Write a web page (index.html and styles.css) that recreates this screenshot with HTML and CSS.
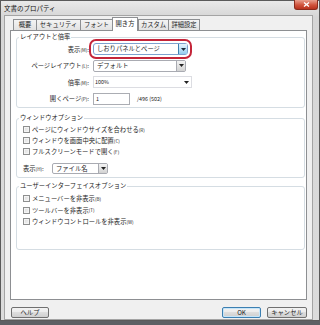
FILE: index.html
```html
<!DOCTYPE html>
<html lang="ja">
<head>
    <meta charset="UTF-8">
    <meta name="viewport" content="width=device-width, initial-scale=1.0">
    <title>文書のプロパティ</title>
    <link rel="stylesheet" href="styles.css">
</head>
<body>
    <div class="window">
        <div class="titlebar">
            <span class="title">文書のプロパティ</span>
            <span class="close-btn">
                <svg width="7" height="5" viewBox="0 0 7 5"><path d="M1 0.5l5 4M6 0.5l-5 4" stroke="#fff" stroke-width="1.3"/></svg>
            </span>
        </div>
        <div class="frame">
            <div class="client">
                <div class="tabs">
                    <div class="tab tab-summary">概要</div>
                    <div class="tab tab-security">セキュリティ</div>
                    <div class="tab tab-font">フォント</div>
                    <div class="tab tab-open active">開き方</div>
                    <div class="tab tab-custom">カスタム</div>
                    <div class="tab tab-advanced">詳細設定</div>
                </div>

                <div class="panel">
                    <!-- レイアウトと倍率 -->
                    <fieldset class="group group-layout">
                        <legend>レイアウトと倍率</legend>
                        <div class="layout-grid">
                            <label class="row-label">表示<span class="key">(M)</span>:</label>
                            <div class="combo combo-hot highlight w95">
                                <span class="combo-text">しおりパネルとページ</span>
                                <span class="combo-btn"><svg width="5" height="3" viewBox="0 0 5 3"><path d="M0 0h5L2.5 3z" fill="#1b2a3a"/></svg></span>
                            </div>

                            <label class="row-label">ページレイアウト<span class="key">(L)</span>:</label>
                            <div class="combo w93">
                                <span class="combo-text">デフォルト</span>
                                <span class="combo-btn"><svg width="5" height="3" viewBox="0 0 5 3"><path d="M0 0h5L2.5 3z" fill="#222"/></svg></span>
                            </div>

                            <label class="row-label">倍率<span class="key">(M)</span>:</label>
                            <div class="combo combo-flat w99">
                                <span class="combo-text small">100%</span>
                                <span class="combo-arrow"><svg width="5" height="3" viewBox="0 0 5 3"><path d="M0 0h5L2.5 3z" fill="#222"/></svg></span>
                            </div>

                            <label class="row-label">開くページ<span class="key">(P)</span>:</label>
                            <div class="page-row">
                                <span class="textbox">1</span>
                                <span class="page-count">/496 (502)</span>
                            </div>
                        </div>
                    </fieldset>

                    <!-- ウィンドウオプション -->
                    <fieldset class="group group-window">
                        <legend>ウィンドウオプション</legend>
                        <div class="check-row"><span class="checkbox"></span>ページにウィンドウサイズを合わせる<span class="key">(R)</span></div>
                        <div class="check-row"><span class="checkbox"></span>ウィンドウを画面中央に配置<span class="key">(C)</span></div>
                        <div class="check-row"><span class="checkbox"></span>フルスクリーンモードで開く<span class="key">(F)</span></div>
                        <div class="show-row">
                            <label class="show-label">表示<span class="key">(H)</span>:</label>
                            <div class="combo w56">
                                <span class="combo-text">ファイル名</span>
                                <span class="combo-btn"><svg width="5" height="3" viewBox="0 0 5 3"><path d="M0 0h5L2.5 3z" fill="#222"/></svg></span>
                            </div>
                        </div>
                    </fieldset>

                    <!-- ユーザーインターフェイスオプション -->
                    <fieldset class="group group-ui">
                        <legend>ユーザーインターフェイスオプション</legend>
                        <div class="check-row tall"><span class="checkbox"></span>メニューバーを非表示<span class="key">(B)</span></div>
                        <div class="check-row tall"><span class="checkbox"></span>ツールバーを非表示<span class="key">(T)</span></div>
                        <div class="check-row tall"><span class="checkbox"></span>ウィンドウコントロールを非表示<span class="key">(W)</span></div>
                    </fieldset>
                </div>

                <div class="buttons">
                    <button class="btn btn-help">ヘルプ</button>
                    <div class="spacer"></div>
                    <button class="btn btn-default">OK</button>
                    <button class="btn btn-cancel">キャンセル</button>
                </div>
            </div>
        </div>
    </div>
</body>
</html>
```

FILE: styles.css
```css
* {
    box-sizing: border-box;
}
body {
    margin: 0;
    width: 320px;
    height: 325px;
    overflow: hidden;
    background: #5d6064;
    font-family: "Noto Sans CJK JP", "Noto Sans", sans-serif;
    font-size: 6.3px;
    color: #1e1e1e;
}
.window {
    width: 320px;
    height: 321px;
    border: 1px solid #5a5a5a;
    background: linear-gradient(#e9e9e9, #d6d6d6 16px, #dcdcdc);
    display: flex;
    flex-direction: column;
}
.titlebar {
    height: 14px;
    display: flex;
    align-items: center;
    justify-content: space-between;
    padding: 0 1px 0 3px;
}
.title {
    font-size: 6.5px;
    color: #111;
}
.close-btn {
    align-self: flex-start;
    margin-top: -1px;
    width: 24px;
    height: 10px;
    background: linear-gradient(#e8a08f, #d0533c 55%, #b8321e);
    border: 1px solid #8a2b1c;
    border-top: none;
    border-radius: 0 0 3px 3px;
    display: flex;
    align-items: center;
    justify-content: center;
}
.frame {
    flex: 1;
    display: flex;
    padding: 0 6px 0 3px;
}
.client {
    flex: 1;
    display: flex;
    flex-direction: column;
    background: #f0f0f0;
    border: 1px solid #a4a4a4;
    padding: 0 5px;
}

/* tabs */
.tabs {
    display: flex;
    align-items: flex-end;
    height: 13px;
    margin-top: 1px;
    padding-left: 3px;
}
.tab {
    height: 11px;
    line-height: 10px;
    text-align: center;
    border: 1px solid #8d8f92;
    border-bottom: none;
    border-right: none;
    background: linear-gradient(#f4f4f4, #e2e2e2);
    white-space: nowrap;
}
.tab:last-child,
.tab.active {
    border-right: 1px solid #8d8f92;
}
.tab.active {
    height: 14px;
    line-height: 12px;
    margin-bottom: -1px;
    background: #fff;
    position: relative;
    z-index: 1;
}
.tab-summary { width: 23px; }
.tab-security { width: 44px; }
.tab-font { width: 32px; }
.tab-open { width: 26px; }
.tab-custom { width: 30px; }
.tab-advanced { width: 32px; }

/* panel */
.panel {
    height: 270px;
    background: #fff;
    border: 1px solid #8d8f92;
    padding: 2px 1px 0 5px;
}
.group {
    margin: 0;
    min-width: 0;
    border: 1px solid #d5dde3;
    border-radius: 3px;
    padding: 2px 4px 2px 6px;
}
.group legend {
    padding: 0 1px;
    margin-left: -4px;
    line-height: 8px;
    color: #222;
}
.key {
    font-size: 4.6px;
}

/* layout grid */
.layout-grid {
    display: grid;
    grid-template-columns: 66px auto;
    column-gap: 4px;
    row-gap: 4.5px;
    grid-auto-rows: 12px;
    align-items: center;
}
.row-label {
    text-align: right;
    white-space: nowrap;
}
.combo {
    display: flex;
    height: 12px;
    border: 1px solid #a9abb2;
    border-radius: 2px;
    background: #fff;
}
.combo-text {
    flex: 1;
    padding-left: 3px;
    line-height: 10px;
    white-space: nowrap;
    overflow: hidden;
}
.combo-text.small {
    font-size: 5.4px;
    padding-left: 1px;
}
.combo-btn {
    width: 9px;
    display: flex;
    align-items: center;
    justify-content: center;
    border-left: 1px solid #a9abb2;
    background: linear-gradient(#f3f3f3, #e3e3e3 50%, #d2d2d2);
}
.combo-hot {
    border-color: #7da2ce;
}
.combo-hot .combo-btn {
    border-left-color: #3c7fb1;
    background: linear-gradient(#e6f4fc, #bfe3f8 50%, #93cdef);
}
.combo-flat {
    border-color: #dcdde2;
    border-radius: 0;
}
.combo-arrow {
    width: 9px;
    display: flex;
    align-items: center;
    justify-content: center;
}
.highlight {
    box-shadow: 0 0 0 2px #fff, 0 0 0 4px #c42539;
    border-radius: 3px;
}
.w95 { width: 95px; }
.w93 { width: 93px; }
.w99 { width: 99px; }
.w56 { width: 56px; }
.page-row {
    display: flex;
    align-items: center;
    gap: 7px;
}
.textbox {
    width: 37px;
    height: 12px;
    border: 1px solid #abadb3;
    background: #fff;
    font-size: 5.4px;
    line-height: 10px;
    padding-left: 2px;
}
.page-count {
    font-size: 5.4px;
}

/* groups 2 and 3 */
.group-window {
    margin-top: 6.5px;
    padding-bottom: 2.5px;
}
.group-ui {
    margin-top: 4.5px;
    padding-top: 3px;
    padding-bottom: 21px;
}
.check-row {
    display: flex;
    align-items: center;
    height: 11px;
    white-space: nowrap;
}
.check-row.tall {
    height: 11.5px;
}
.checkbox {
    width: 7px;
    height: 7px;
    margin-right: 2px;
    border: 1px solid #8e8f8f;
    background: linear-gradient(135deg, #d9d9d9, #f7f7f7);
    box-shadow: inset 0 0 0 1px #f4f4f4;
}
.show-row {
    display: flex;
    align-items: center;
    margin-top: 6px;
    gap: 4px;
}
.show-label {
    width: 25px;
    white-space: nowrap;
}
.show-row .combo {
    height: 11px;
}
.show-row .combo-text {
    line-height: 9px;
}

/* bottom buttons */
.buttons {
    display: flex;
    margin-top: 7px;
    gap: 6px;
}
.spacer {
    flex: 1;
}
.btn {
    height: 11px;
    padding: 0;
    font-family: inherit;
    font-size: 6.3px;
    line-height: 9px;
    color: #1e1e1e;
    border: 1px solid #707070;
    border-radius: 2px;
    background: linear-gradient(#f2f2f2, #ebebeb 50%, #dddddd 50%, #cfcfcf);
}
.btn-help {
    width: 38px;
    margin-left: 1px;
}
.btn-default {
    width: 39px;
    border-color: #3c7fb1;
    box-shadow: inset 0 0 0 1px #c5e5f9;
}
.btn-cancel {
    width: 40px;
}
```
